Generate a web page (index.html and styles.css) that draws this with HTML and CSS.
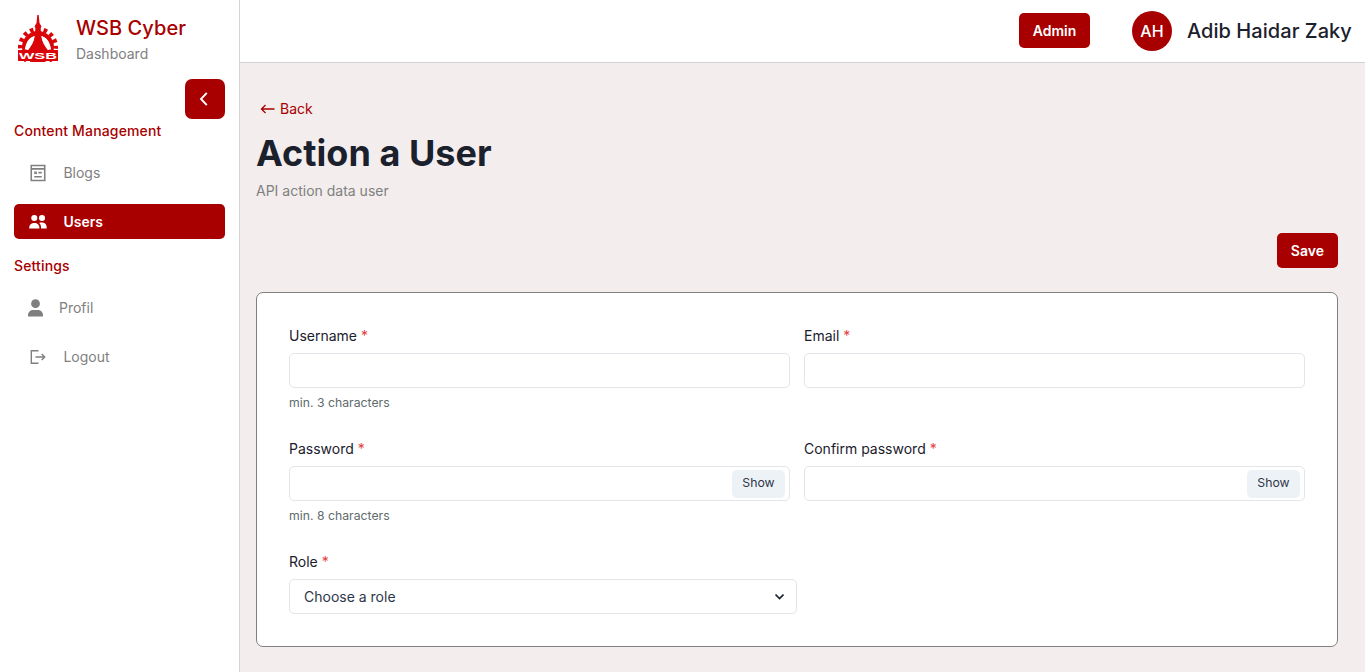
FILE: index.html
```html
<!DOCTYPE html>
<html lang="en">
<head>
<meta charset="utf-8">
<title>WSB Cyber Dashboard</title>
<link rel="stylesheet" href="styles.css">
</head>
<body>
<div class="app">
  <aside class="sidebar">
    <div class="brand">
      <svg class="logo" width="42" height="48" viewBox="0 0 42 48">
        <circle cx="21" cy="33" r="13.800" fill="none" stroke="#d90508" stroke-width="4.400"/>
        <circle cx="21" cy="33" r="17.800" fill="none" stroke="#d90508" stroke-width="4.400" stroke-dasharray="3.600 3.390" stroke-dashoffset="1.800"/>
        <path d="M20.300 1h1.400l.8 8 2 3.500-.9 1.500.6 8c.8 6 3.600 10 7.300 15h-21c3.700-5 6.500-9 7.300-15l.6-8-.9-1.500 2-3.500z" fill="#d90508"/>
        <path d="M17 22.500c-5 1-8 6-9.200 13h2.700c3.600-4 6.300-8 6.500-13zM25 22.500c5 1 8 6 9.200 13h-2.700c-3.600-4-6.300-8-6.500-13z" fill="#fff"/>
        <rect x="1" y="36" width="40" height="11" fill="#d90508"/>
        <text class="logo-text" x="2" y="44.700" textLength="38" lengthAdjust="spacingAndGlyphs">WSB</text>
      </svg>
      <div>
        <div class="brand-name">WSB Cyber</div>
        <div class="brand-sub">Dashboard</div>
      </div>
    </div>
    <button class="collapse" aria-label="Collapse"><svg width="24" height="24" viewBox="0 0 24 24" fill="none" stroke="#fff" stroke-width="1.900"><path d="M14.800 5.800 9 12l5.800 6.200"/></svg></button>
    <div class="group">Content Management</div>
    <nav>
      <a class="item"><svg width="18" height="18" viewBox="0 0 24 24" fill="none" stroke="currentColor" stroke-width="2.100"><path d="M3 2h18v20H3zM3 6.500h18M12.500 11.500H17M7 17h10"/><path d="M7 10h3.500v3.500H7z" fill="currentColor" stroke="none"/></svg>Blogs</a>
      <a class="item active"><svg width="18" height="18" viewBox="0 0 18 18" fill="currentColor"><circle cx="5.300" cy="5" r="3.050"/><circle cx="13" cy="5" r="3.050"/><path d="M.2 15.400v-1c0-2.700 2.100-4.500 5.100-4.500s5.100 1.800 5.100 4.500v1zM12 15.400v-1.200c0-1.700-.7-3.200-1.900-4.200.9-.3 1.700-.4 2.700-.4 3 0 4.900 1.900 4.900 4.600v1.200z"/></svg>Users</a>
    </nav>
    <div class="group group-settings">Settings</div>
    <nav>
      <a class="item profile"><svg width="18" height="18" viewBox="0 0 18 18" fill="currentColor"><circle cx="9.500" cy="4.700" r="4.400"/><path d="M2 17.500v-1.600c0-3.100 2.700-5 5.200-5h4.600c2.500 0 5.200 1.900 5.200 5v1.600z"/></svg>Profil</a>
      <a class="item"><svg width="18" height="18" viewBox="0 0 18 18" fill="none" stroke="currentColor" stroke-width="1.400"><path d="M9.500 2.700H2.300v12.600h7.200M6.500 9h9M12.700 6l3 3-3 3"/></svg>Logout</a>
    </nav>
  </aside>
  <div class="main">
    <header class="topbar">
      <button class="btn admin">Admin</button>
      <div class="avatar">AH</div>
      <div class="user">Adib Haidar Zaky</div>
    </header>
    <main class="content">
      <a class="back"><svg width="16" height="14" viewBox="0 0 16 14" fill="none" stroke="currentColor" stroke-width="1.300"><path d="M14.500 7H1.500M5.500 3l-4 4 4 4"/></svg>Back</a>
      <h1>Action a User</h1>
      <p class="desc">API action data user</p>
      <div class="actions"><button class="btn">Save</button></div>
      <form class="card">
        <div class="field">
          <label>Username <i>*</i></label>
          <div class="input"></div>
          <small>min. 3 characters</small>
        </div>
        <div class="field">
          <label>Email <i>*</i></label>
          <div class="input"></div>
        </div>
        <div class="field">
          <label>Password <i>*</i></label>
          <div class="input"><span class="show">Show</span></div>
          <small>min. 8 characters</small>
        </div>
        <div class="field">
          <label>Confirm password <i>*</i></label>
          <div class="input"><span class="show">Show</span></div>
        </div>
        <div class="field role">
          <label>Role <i>*</i></label>
          <div class="input select">Choose a role<svg width="10" height="8" viewBox="0 0 10 8" fill="none" stroke="#1a202c" stroke-width="1.700"><path d="m1.500 1.500 4 4 4-4"/></svg></div>
        </div>
      </form>
    </main>
  </div>
</div>
</body>
</html>
```
FILE: styles.css
```css
* { box-sizing: border-box; }
body { margin: 0; font: 14px/21px Inter, "Liberation Sans", sans-serif; color: #1a202c; background: #fff; }
.app { display: flex; height: 672px; overflow: hidden; }
.sidebar { width: 240px; flex: none; border-right: 1px solid #d3d3d3; padding: 14px 14px 0; display: flex; flex-direction: column; }
.brand { display: flex; gap: 17px; padding-left: 3px; height: 65px; }
.logo { display: block; }
.logo-text { font: 900 9px "Liberation Sans", sans-serif; fill: #fff; }
.brand-name { font-size: 20px; line-height: 28px; font-weight: 500; color: #a80000; letter-spacing: .05px; }
.brand-sub { color: #808080; line-height: 24px; }
.collapse { width: 40px; height: 40px; align-self: flex-end; border: 0; border-radius: 7px; background: #a80000; display: flex; align-items: center; justify-content: center; padding: 0 2px 0 0; }
.group { font-size: 14px; line-height: 21px; margin-top: 1px; font-weight: 500; color: #a80000; letter-spacing: .15px; }
.group-settings { margin-top: 16px; }
nav { display: flex; flex-direction: column; gap: 14px; margin-top: 14px; }
.item { height: 35px; border-radius: 5px; display: flex; align-items: center; gap: 16.5px; padding-left: 14.9px; color: #808080; }
.item svg { flex: none; }
.item.active { background: #a80000; color: #fff; font-weight: 600; }
.item.profile { padding-left: 12px; gap: 15px; }
.main { flex: 1; background: #f3eded; }
.topbar { height: 63px; background: #fff; border-bottom: 1px solid #d3d3d3; display: flex; justify-content: flex-end; align-items: center; padding-right: 13px; }
.btn { border: 0; height: 35px; padding: 0 14px; border-radius: 5px; background: #a80000; color: #fff; font: 600 14px Inter, sans-serif; }
.admin { width: 71px; padding: 0; margin-bottom: 2px; }
.avatar { width: 40px; height: 40px; border-radius: 50%; background: #a80000; color: #fff; font-size: 16px; font-weight: 500; display: flex; align-items: center; justify-content: center; margin: 0 15px 0 42px; }
.user { font-size: 20px; font-weight: 500; width: 165px; white-space: nowrap; letter-spacing: .05px; }
.content { padding: 35px 27px 0 16px; }
.back { display: flex; align-items: center; gap: 4px; padding-left: 4px; color: #a80000; }
h1 { margin: 11px 0 0; font-size: 36px; line-height: 46px; font-weight: 700; letter-spacing: .04px; }
.desc { margin: 4px 0 0; color: #808080; }
.actions { display: flex; justify-content: flex-end; margin: 32px 0 24px; }
.card { background: #fff; border: 1px solid #808080; border-radius: 7px; height: 355px; padding: 32px; display: grid; grid-template-columns: 1fr 1fr; grid-template-rows: 113px 113px auto; column-gap: 14px; }
label { display: block; line-height: 21px; font-weight: 400; margin-bottom: 7px; }
label i { font-style: normal; color: #e53e3e; }
.input { height: 35px; border: 1px solid #e2e5e9; border-radius: 5px; display: flex; align-items: center; justify-content: flex-end; padding-right: 4px; }
.show { background: #edf2f7; border-radius: 5px; height: 28px; width: 53px; display: flex; align-items: center; justify-content: center; font-size: 12.25px; color: #2d3748; padding-bottom: 2px; }
small { display: block; font-size: 12.25px; line-height: 16px; margin-top: 7px; color: #606b6b; }
.role { width: 508px; grid-column: 1 / -1; }
.select { justify-content: space-between; padding: 0 12px 0 14px; color: #2d3748; }
```
